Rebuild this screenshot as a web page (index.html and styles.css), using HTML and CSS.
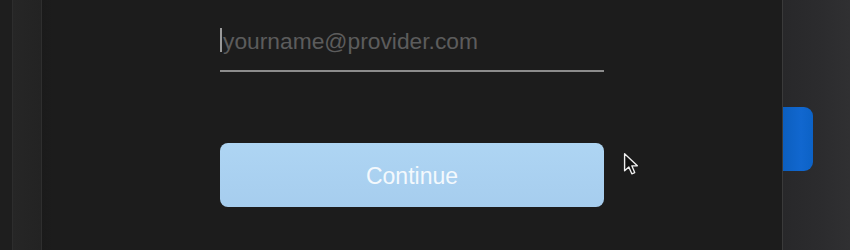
FILE: index.html
```html
<!DOCTYPE html>
<html>
<head>
<meta charset="utf-8">
<link rel="stylesheet" href="styles.css">
</head>
<body>
<div class="app">
  <div class="rail"></div>
  <div class="side"></div>
  <main class="main">
    <form class="form">
      <div class="field">
        <span class="caret"></span><span class="placeholder">yourname@provider.com</span>
      </div>
      <button type="button" class="continue">Continue</button>
    </form>
    <svg class="pointer" width="17" height="26" viewBox="0 0 16 24">
      <path d="M1.5 1.5 L1.5 17.5 L5.5 13.8 L8.3 20.3 L11 19.1 L8.3 12.8 L13.5 12.8 Z" fill="#111" stroke="#eee" stroke-width="1.3" stroke-linejoin="round"/>
    </svg>
  </main>
  <aside class="panel">
    <div class="tab"></div>
  </aside>
</div>
</body>
</html>
```
FILE: styles.css
```css
html, body {
  margin: 0;
  padding: 0;
  background: #1c1c1c;
  overflow: hidden;
}
.app {
  display: flex;
  width: 850px;
  height: 250px;
  font-family: "Liberation Sans", Arial, sans-serif;
}
.rail {
  width: 12px;
  background: #1e1e1e;
  border-right: 1px solid #2d2d2d;
}
.side {
  width: 28px;
  background: linear-gradient(90deg, #262626, #232323);
  border-right: 1px solid #2e2e2e;
}
.main {
  position: relative;
  flex: 1;
  background: linear-gradient(90deg, #1a1a1a 0, #1c1c1c 10px, #1c1c1c 100%);
  border-right: 1px solid #3a3a3a;
  padding-left: 178px;
  padding-top: 28px;
  box-sizing: border-box;
}
.form {
  width: 384px;
  margin: 0;
}
.field {
  display: flex;
  align-items: center;
  height: 44px;
  border-bottom: 2px solid #8c8c8c;
  box-sizing: border-box;
  padding-bottom: 18px;
}
.caret {
  width: 2px;
  height: 24px;
  background: #9a9a9a;
  margin-right: 1px;
}
.placeholder {
  font-size: 22.8px;
  color: #5c5c5c;
  padding-top: 3px;
}
.continue {
  display: block;
  margin-top: 71px;
  width: 384px;
  height: 64px;
  border: none;
  border-radius: 8px;
  background: linear-gradient(180deg, #aed5f3 0%, #a6cdee 100%);
  color: #f4f9fd;
  font-family: "Liberation Sans", Arial, sans-serif;
  font-size: 23px;
  padding: 3px 0 0;
}
.pointer {
  position: absolute;
  left: 581px;
  top: 152px;
}
.panel {
  width: 67px;
  background: linear-gradient(90deg, #28282a 0%, #2c2c2e 60%, #303032 100%);
  padding-top: 107px;
  box-sizing: border-box;
}
.tab {
  width: 30px;
  height: 64px;
  border-radius: 0 9px 9px 0;
  background: linear-gradient(90deg, #0c5fbf 0%, #1167cf 60%, #0c62c6 100%);
}
```
